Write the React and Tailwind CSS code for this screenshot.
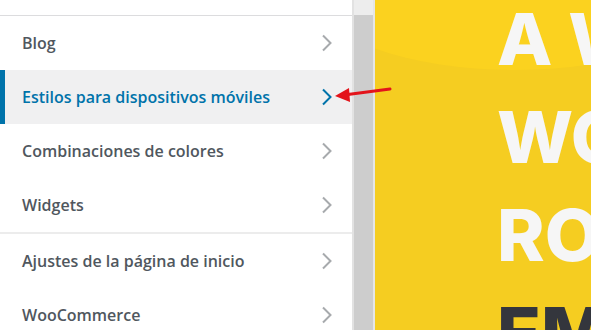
// menu rows, split in groups by a divider line
const groups = [
  ["Blog", "Estilos para dispositivos móviles", "Combinaciones de colores", "Widgets"],
  ["Ajustes de la página de inicio", "WooCommerce"],
];

const active = "Estilos para dispositivos móviles";

const Chevron = ({ className }) => (
  <svg width="12" height="18" viewBox="0 0 12 18" className={className}>
    <polyline points="2,1.5 9.5,9 2,16.5" fill="none" stroke="currentColor" strokeWidth="2" />
  </svg>
);

const MenuRow = ({ label }) => {
  const isActive = label === active;
  return (
    <div
      className={`relative flex h-[54px] items-center justify-between pl-[22px] pr-[19px] ${
        isActive ? "bg-[#f0f0f1] text-[#0073aa]" : "bg-white text-[#50575e]"
      }`}
    >
      {isActive && <div className="absolute left-0 top-0 h-full w-[5px] bg-[#0073aa]" />}
      <span className="text-[16px] font-semibold">{label}</span>
      <Chevron className={isActive ? "text-[#0073aa]" : "text-[#a7aaad]"} />
    </div>
  );
};

const App = () => {
  return (
    <div
      className="relative flex h-[330px] w-[591px] overflow-hidden bg-white"
      style={{ fontFamily: '"Open Sans", "Liberation Sans", sans-serif' }}
    >
      {/* customizer panel */}
      <div className="w-[354px] shrink-0 border-r-2 border-[#e2e2e2] bg-white">
        <div className="h-[16px] border-b border-[#dcdcde]" />
        {groups.map((group, i) => (
          <div key={i} className={i > 0 ? "border-t-2 border-[#ececec]" : ""}>
            {group.map((label) => (
              <MenuRow key={label} label={label} />
            ))}
          </div>
        ))}
      </div>

      {/* scrollbar */}
      <div className="flex w-[21px] shrink-0 flex-col border-r-2 border-[#e6e6e6] bg-[#ededed]">
        <div className="h-[15px]" />
        <div className="flex-1 bg-[#cdcdcd]" />
      </div>

      {/* site preview */}
      <div className="relative flex-1 overflow-hidden bg-[#f5cd21]">
        <div className="absolute -left-[60px] -top-[80px] h-[150px] w-[400px] rounded-[50%] bg-[#fbd21f]" />
        <div
          className="relative -mt-[10px] pl-[122px] text-[72px] font-extrabold leading-[98px] whitespace-nowrap text-[#f6f6f6]"
          style={{ fontFamily: '"Inter", "Liberation Sans", sans-serif' }}
        >
          <div>A W</div>
          <div>WO</div>
          <div>RO</div>
          <div className="text-[#34363d]">EM</div>
        </div>
      </div>

      {/* red pointer arrow */}
      <svg className="absolute left-[330px] top-[80px]" width="64" height="26" viewBox="0 0 64 26">
        <line x1="14" y1="15" x2="60" y2="9" stroke="#e3141b" strokeWidth="3" strokeLinecap="round" />
        <polygon points="5,16 19,8 20,22" fill="#e3141b" />
      </svg>
    </div>
  );
};

export default App;
